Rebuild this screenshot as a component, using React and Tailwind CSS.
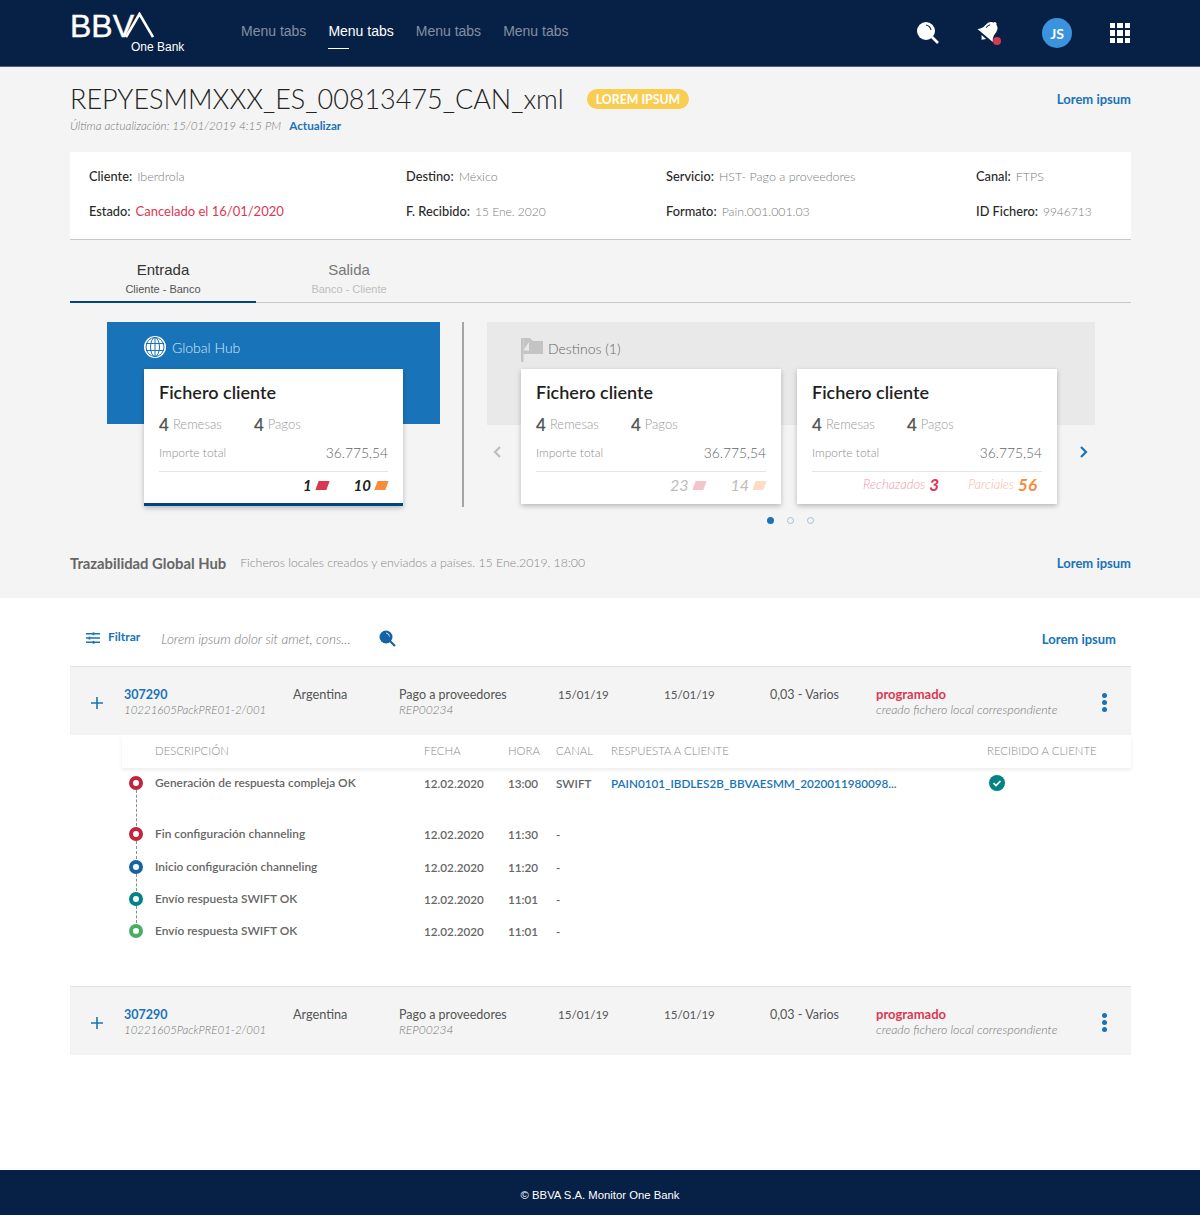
import React from 'react';

const MENU = [
    { label: 'Menu tabs', active: false },
    { label: 'Menu tabs', active: true },
    { label: 'Menu tabs', active: false },
    { label: 'Menu tabs', active: false },
];

const STEPS = [
    { text: 'Generación de respuesta compleja OK', time: '13:00', canal: 'SWIFT', ring: 'border-[#c0243f]', link: true, height: 'h-[51px]' },
    { text: 'Fin configuración channeling', time: '11:30', canal: '-', ring: 'border-[#c0243f]', height: 'h-[33px]' },
    { text: 'Inicio configuración channeling', time: '11:20', canal: '-', ring: 'border-[#1464a5]', height: 'h-[32px]' },
    { text: 'Envío respuesta SWIFT OK', time: '11:01', canal: '-', ring: 'border-[#028484]', height: 'h-[32px]' },
    { text: 'Envío respuesta SWIFT OK', time: '11:01', canal: '-', ring: 'border-[#48ae64]', last: true, height: 'h-[32px]' },
];

const Caret = ({ left, className }) => (
    <svg width="10" height="14" viewBox="0 0 10 14" fill="none" className={className}>
        <path d={left ? 'M8 2 3 7l5 5' : 'M2 2l5 5-5 5'} stroke="currentColor" strokeWidth="2.2" />
    </svg>
);

const Skew = ({ className }) => <span className={`inline-block w-[11px] h-[9px] -skew-x-[20deg] ${className}`} />;

// Field of the summary panel
const Field = ({ label, value, valueClass = 'text-[#7d7d7d] font-light text-[12.5px]' }) => (
    <p className="text-[12.8px] leading-4 whitespace-nowrap">
        <span className="font-medium text-[#2a2a2a]">{label}:</span>
        <span className={`ml-[5px] ${valueClass}`}>{value}</span>
    </p>
);

const Card = ({ footer, blue, width = 'w-[260px]', height = 'h-[135px]' }) => (
    <div className={`${width} ${height} shrink-0 bg-white shadow-[0_2px_5px_rgba(0,0,0,0.25)] px-[15px] pt-[12px] ${blue ? 'border-b-[3px] border-[#004481]' : ''}`}>
        <h3 className="text-[18px] leading-[23px] font-semibold text-[#1f1f1f]">Fichero cliente</h3>
        <div className="flex mt-[11px] h-[20px] items-center text-[13px] text-[#9a9a9a] font-light">
            <span className="text-[17px] font-semibold text-[#555] mr-[4px]">4</span>
            <span className="w-[81px]">Remesas</span>
            <span className="text-[17px] font-semibold text-[#555] mr-[4px]">4</span>
            <span>Pagos</span>
        </div>
        <div className="flex justify-between items-center mt-[8px] h-[20px] font-light">
            <span className="text-[12px] text-[#8e8e8e]">Importe total</span>
            <span className="text-[13.8px] text-[#666]">36.775,54</span>
        </div>
        <div className="border-t border-[#e4e4e4] mt-[8px] pt-[3px] h-[24px] flex justify-end items-center italic">{footer}</div>
    </div>
);

const Row = () => (
    <div className="h-[69px] bg-[#f4f4f4] flex text-[12.5px] text-[#555] pt-[21px] shadow-[inset_0_1px_1px_rgba(0,0,0,0.08)]">
        <div className="w-[54px] pl-[21px] pt-[10px] text-[#1973b8]">
            <svg width="12" height="12" viewBox="0 0 12 12"><path d="M6 0v12M0 6h12" stroke="currentColor" strokeWidth="1.6" /></svg>
        </div>
        <div className="w-[169px] leading-[15px]">
            <p className="text-[#1973b8] font-bold text-[12.5px]">307290</p>
            <p className="italic font-light text-[#777] text-[11.5px]">10221605PackPRE01-2/001</p>
        </div>
        <p className="w-[106px] leading-[15px] text-[12.7px]">Argentina</p>
        <div className="w-[159px] leading-[15px]">
            <p>Pago a proveedores</p>
            <p className="italic font-light text-[#777] text-[12px]">REP00234</p>
        </div>
        <p className="w-[106px] leading-[15px] text-[11.6px]">15/01/19</p>
        <p className="w-[106px] leading-[15px] text-[11.6px]">15/01/19</p>
        <p className="w-[106px] leading-[15px]">0,03 - Varios</p>
        <div className="w-[226px] leading-[15px]">
            <p className="font-bold text-[#da3851] text-[13px]">programado</p>
            <p className="italic font-light text-[#777] text-[12.4px]">creado fichero local correspondiente</p>
        </div>
        <div className="flex flex-col gap-[2.5px] pt-[6px]">
            <span className="w-[4.5px] h-[4.5px] rounded-full bg-[#1973b8]" />
            <span className="w-[4.5px] h-[4.5px] rounded-full bg-[#1973b8]" />
            <span className="w-[4.5px] h-[4.5px] rounded-full bg-[#1973b8]" />
        </div>
    </div>
);

const App = () => {
    return (
        <div className="min-h-[1215px] flex flex-col bg-white font-['Lato','Open_Sans',sans-serif] text-[#555]">
            {/* Header */}
            <header className="h-[67px] bg-[#072146] border-b border-[#4a6283] flex items-center pl-[70px] pr-[70px]">
                <div className="w-[171px] h-full pt-[9px] text-white font-['Liberation_Sans',sans-serif]">
                    <div className="flex items-start h-[27px]">
                        <span className="text-[32px] leading-[34px] [-webkit-text-stroke:0.4px_white]">BBV</span>
                        <svg width="29" height="27" viewBox="0 0 29 27" className="-ml-[9px] mt-[3px]"><path d="M1 25 14.500 2 28 25" fill="none" stroke="white" strokeWidth="2.6" /></svg>
                    </div>
                    <p className="text-[12px] leading-[14px] ml-[61px] mt-[4px]">One Bank</p>
                </div>
                <nav className="flex gap-[22px] font-['Liberation_Sans',sans-serif] text-[14px] h-full">
                    {MENU.map((item, i) => (
                        <div key={i} className={`pt-[23px] ${item.active ? 'text-white' : 'text-[#8390a3]'}`}>
                            <span className="block leading-4 whitespace-nowrap">{item.label}</span>
                            {item.active && <span className="block w-[21px] h-px bg-white mt-[9px]" />}
                        </div>
                    ))}
                </nav>
                <div className="ml-auto flex items-center">
                    <svg width="24" height="24" viewBox="0 0 24 24">
                        <circle cx="10" cy="10" r="9" fill="white" />
                        <path d="M10 4a6.500 6.500 0 0 1 5 5" fill="none" stroke="#072146" strokeWidth="1.100" />
                        <path d="M16 16l6 6" stroke="white" strokeWidth="2.6" />
                    </svg>
                    <svg width="26" height="26" viewBox="0 0 26 26" className="ml-[36px]">
                        <g transform="rotate(40 12 12)" fill="white">
                            <circle cx="12" cy="1.500" r="1.800" />
                            <path d="M12 1c-4.500 0-6.500 3-6.500 7.500 0 3.500-1.500 6-3.500 8h20c-2-2-3.500-4.500-3.500-8C18.500 4 16.500 1 12 1z" />
                            <path d="M9 18.500h6L12 22z" />
                            <path d="M9 5c-1 1-1.300 3-1.300 5" fill="none" stroke="#072146" strokeWidth="1" />
                        </g>
                        <circle cx="21" cy="21" r="4" fill="#da3851" />
                    </svg>
                    <div className="ml-[40px] w-[30px] h-[30px] rounded-full bg-[#3b93de] flex items-center justify-center text-white text-[14px] font-bold">JS</div>
                    <div className="ml-[38px] grid grid-cols-3 gap-[2px] w-[20px]">
                        {[...Array(9)].map((_, i) => <span key={i} className="w-[5.330px] h-[5.330px] bg-white" />)}
                    </div>
                </div>
            </header>

            {/* Grey part */}
            <section className="bg-[#f4f4f4] h-[531px] px-[70px] pr-[69px]">
                <div className="flex items-start pt-[14px] h-[70px]">
                    <div>
                        <div className="flex items-center h-[35px]">
                            <h1 className="text-[27px] leading-[35px] font-light text-[#222] whitespace-nowrap">REPYESMMXXX_ES_00813475_CAN_xml</h1>
                            <span className="ml-[23px] h-[20px] px-[9px] pt-[3px] rounded-full bg-[#f8cd51] text-white text-[12.300px] font-bold flex items-center">LOREM IPSUM</span>
                        </div>
                        <p className="text-[11.7px] leading-4 mt-[1px]">
                            <span className="italic font-light text-[#777]">Última actualización: 15/01/2019 4:15 PM</span>
                            <span className="ml-[8px] font-bold text-[#1973b8]">Actualizar</span>
                        </p>
                    </div>
                    <a className="ml-auto mt-[10px] text-[13px] font-bold text-[#1973b8] leading-4">Lorem ipsum</a>
                </div>

                {/* Summary */}
                <div className="mt-[15px] h-[88px] bg-white border-b border-[#c8c8c8] flex pl-[19px] pt-[16px]">
                    <div className="w-[317px] flex flex-col gap-[18px]">
                        <Field label="Cliente" value="Iberdrola" />
                        <Field label="Estado" value="Cancelado el 16/01/2020" valueClass="text-[#da3851] text-[13px]" />
                    </div>
                    <div className="w-[260px] flex flex-col gap-[18px]">
                        <Field label="Destino" value="México" />
                        <Field label="F. Recibido" value="15 Ene. 2020" valueClass="text-[#7d7d7d] font-light text-[12px]" />
                    </div>
                    <div className="w-[310px] flex flex-col gap-[18px]">
                        <Field label="Servicio" value="HST- Pago a proveedores" />
                        <Field label="Formato" value="Pain.001.001.03" valueClass="text-[#7d7d7d] font-light text-[12.3px]" />
                    </div>
                    <div className="flex flex-col gap-[18px]">
                        <Field label="Canal" value="FTPS" />
                        <Field label="ID Fichero" value="9946713" valueClass="text-[#7d7d7d] font-light text-[12px]" />
                    </div>
                </div>

                {/* Tabs */}
                <div className="flex h-[63px] border-b border-[#c8c8c8] font-['Liberation_Sans',sans-serif] text-center">
                    <div className="w-[186px] h-[63px] border-b-2 border-[#004481] pt-[22px]">
                        <p className="text-[15px] leading-4 text-[#333]">Entrada</p>
                        <p className="text-[11px] leading-3 mt-[5px] text-[#555]">Cliente - Banco</p>
                    </div>
                    <div className="w-[186px] pt-[22px]">
                        <p className="text-[15px] leading-4 text-[#777]">Salida</p>
                        <p className="text-[11px] leading-3 mt-[5px] text-[#bdbdbd]">Banco - Cliente</p>
                    </div>
                </div>

                {/* Hub and destinations */}
                <div className="flex pl-[37px] pt-[19px] h-[205px]">
                    <div className="w-[333px] h-[102px] bg-[#1973b8] pl-[37px] pt-[14px] shrink-0">
                        <div className="flex items-center h-[22px] text-[14px] font-light text-[#d4e9f9] gap-[6px]">
                            <svg width="22" height="22" viewBox="0 0 22 22" fill="none">
                                <circle cx="11" cy="11" r="11" fill="white" />
                                <g stroke="#1973b8" strokeWidth="1">
                                    <ellipse cx="11" cy="11" rx="4.500" ry="9.500" />
                                    <path d="M11 1.500v19M2 7.500h18M2 14.500h18" />
                                    <ellipse cx="11" cy="11" rx="9" ry="9.500" />
                                </g>
                            </svg>
                            Global Hub
                        </div>
                        <div className="mt-[11px]">
                            <Card
                                blue
                                width="w-[259px]"
                                height="h-[137px]"
                                footer={
                                    <>
                                        <span className="text-[15px] font-bold text-[#222] mr-[5px]">1</span>
                                        <Skew className="bg-[#da3851]" />
                                        <span className="text-[15px] font-bold text-[#222] ml-[26px] mr-[5px]">10</span>
                                        <Skew className="bg-[#f78c3c] mr-px" />
                                    </>
                                }
                            />
                        </div>
                    </div>

                    <div className="w-[2px] h-[185px] bg-[#a5a5a5] ml-[22px] mr-[23px] shrink-0" />

                    <div className="w-[608px] shrink-0">
                        <div className="h-[103px] bg-[#e9e9e9] flex">
                            <div className="w-[34px] pt-[123px] pl-[5px] text-[#bdbdbd]"><Caret left /></div>
                            <div className="w-[536px]">
                                <div className="flex items-end h-[47px] pb-[10px] text-[14px] font-light text-[#666] gap-[5px]">
                                    <svg width="22" height="24" viewBox="0 0 22 24" className="mb-[-3px]">
                                        <path d="M0 0h2.500v24H0z" fill="#c4c4c4" />
                                        <path d="M2.500 0H9l3 3h10v13H8l-5.500 0z" fill="#c4c4c4" />
                                        <path d="M2.500 12 8 4v9z" fill="#e9e9e9" />
                                    </svg>
                                    Destinos (1)
                                </div>
                                <div className="flex gap-[16px]">
                                    <Card
                                        footer={
                                            <>
                                                <span className="text-[16px] text-[#bdbdbd] mr-[6px]">23</span>
                                                <Skew className="bg-[#f4c4cb]" />
                                                <span className="text-[16px] text-[#bdbdbd] ml-[25px] mr-[5px]">14</span>
                                                <Skew className="bg-[#fddcc4] mr-px" />
                                            </>
                                        }
                                    />
                                    <Card
                                        footer={
                                            <>
                                                <span className="text-[13px] font-light text-[#ef9aa7] mr-[4px]">Rechazados</span>
                                                <span className="text-[17px] font-bold text-[#da3851]">3</span>
                                                <span className="text-[13px] font-light text-[#fbb4a8] ml-[29px] mr-[4px]">Parciales</span>
                                                <span className="text-[17px] font-bold text-[#f78c3c] mr-[5px]">56</span>
                                            </>
                                        }
                                    />
                                </div>
                                <div className="flex justify-center gap-[13px] mt-[13px] pl-[2px]">
                                    <span className="w-[7px] h-[7px] rounded-full bg-[#1973b8]" />
                                    <span className="w-[7px] h-[7px] rounded-full border border-[#a9bcd6]" />
                                    <span className="w-[7px] h-[7px] rounded-full border border-[#a9bcd6]" />
                                </div>
                            </div>
                            <div className="flex-1 pt-[123px] pl-[22px] text-[#1973b8]"><Caret /></div>
                        </div>
                    </div>
                </div>

                {/* Trazabilidad */}
                <div className="flex items-center mt-[45px] h-[20px] text-[12.3px] whitespace-nowrap">
                    <span className="text-[14.800px] font-bold text-[#666]">Trazabilidad Global Hub</span>
                    <span className="ml-[14px] font-light text-[#888]">Ficheros locales creados y enviados a países. 15 Ene.2019, 18:00</span>
                    <a className="ml-auto text-[13px] font-bold text-[#1973b8] pt-px">Lorem ipsum</a>
                </div>
            </section>

            {/* White part */}
            <main className="flex-1 px-[70px] pr-[69px]">
                <div className="h-[68px] pt-[32px] flex items-start text-[12px] pl-[16px] pr-[15px]">
                    <svg width="14" height="12" viewBox="0 0 14 12" className="mt-[2px] text-[#1973b8]" fill="currentColor">
                        <path d="M0 1h6v1.400H0zM9 1h5v1.400H9zM0 5.300h2v1.400H0zM5 5.300h9v1.400H5zM0 9.600h6V11H0zM9 9.600h5V11H9z" />
                        <circle cx="7.500" cy="1.700" r="1.500" /><circle cx="3.500" cy="6" r="1.500" /><circle cx="7.500" cy="10.300" r="1.500" />
                    </svg>
                    <span className="ml-[8px] font-bold text-[#1973b8] leading-4 -mt-px">Filtrar</span>
                    <span className="ml-[21px] italic font-light text-[#777] leading-[18px] w-[218px] text-[13.500px]">Lorem ipsum dolor sit amet, cons...</span>
                    <svg width="17" height="17" viewBox="0 0 17 17">
                        <circle cx="7" cy="7" r="6.500" fill="#1464a5" />
                        <path d="M7 3a4 4 0 0 1 3.500 3.500" fill="none" stroke="white" strokeWidth="0.8" />
                        <path d="M11 11l5 5" stroke="#1464a5" strokeWidth="2.200" />
                    </svg>
                    <a className="ml-auto mt-px text-[13px] font-bold text-[#1973b8] leading-4">Lorem ipsum</a>
                </div>

                <Row />

                {/* Detail */}
                <div className="ml-[52px] h-[251px] text-[11.7px]">
                    <div className="h-[33px] flex items-center shadow-[0_2px_4px_rgba(0,0,0,0.08)] text-[#888] pl-[33px] font-light whitespace-nowrap text-[11.4px] pb-px">
                        <span className="w-[269px]">DESCRIPCIÓN</span>
                        <span className="w-[84px]">FECHA</span>
                        <span className="w-[48px]">HORA</span>
                        <span className="w-[55px]">CANAL</span>
                        <span className="w-[376px]">RESPUESTA A CLIENTE</span>
                        <span>RECIBIDO A CLIENTE</span>
                    </div>
                    <div className="pt-[7px]">
                        {STEPS.map((step, i) => (
                            <div key={i} className={`flex ${step.height} font-semibold text-[#666] leading-4`}>
                                <div className="w-[33px] pl-[7px] shrink-0">
                                    <span className={`block w-[14px] h-[14px] rounded-full border-[4px] bg-white mt-px ${step.ring}`} />
                                    {!step.last && <span className="block h-[calc(100%-15px)] w-0 ml-[6.500px] border-l border-dashed border-[#8e8e8e]" />}
                                </div>
                                <span className="w-[269px] text-[11.9px]">{step.text}</span>
                                <span className="w-[84px]">12.02.2020</span>
                                <span className="w-[48px]">{step.time}</span>
                                <span className="w-[55px]">{step.canal}</span>
                                {step.link ? (
                                    <>
                                        <a className="w-[378px] text-[#1973b8] whitespace-nowrap">PAIN0101_IBDLES2B_BBVAESMM_2020011980098...</a>
                                        <svg width="16" height="16" viewBox="0 0 16 16">
                                            <circle cx="8" cy="8" r="8" fill="#028484" />
                                            <path d="M4.500 8.200 7 10.500l4.500-4.500" fill="none" stroke="white" strokeWidth="1.700" />
                                        </svg>
                                    </>
                                ) : null}
                            </div>
                        ))}
                    </div>
                </div>

                <Row />
            </main>

            {/* Footer */}
            <footer className="h-[45px] pt-[5px] bg-[#072146] flex items-center justify-center text-white text-[11.300px] font-['Liberation_Sans',sans-serif]">
                © BBVA S.A. Monitor One Bank
            </footer>
        </div>
    );
};

export default App;
